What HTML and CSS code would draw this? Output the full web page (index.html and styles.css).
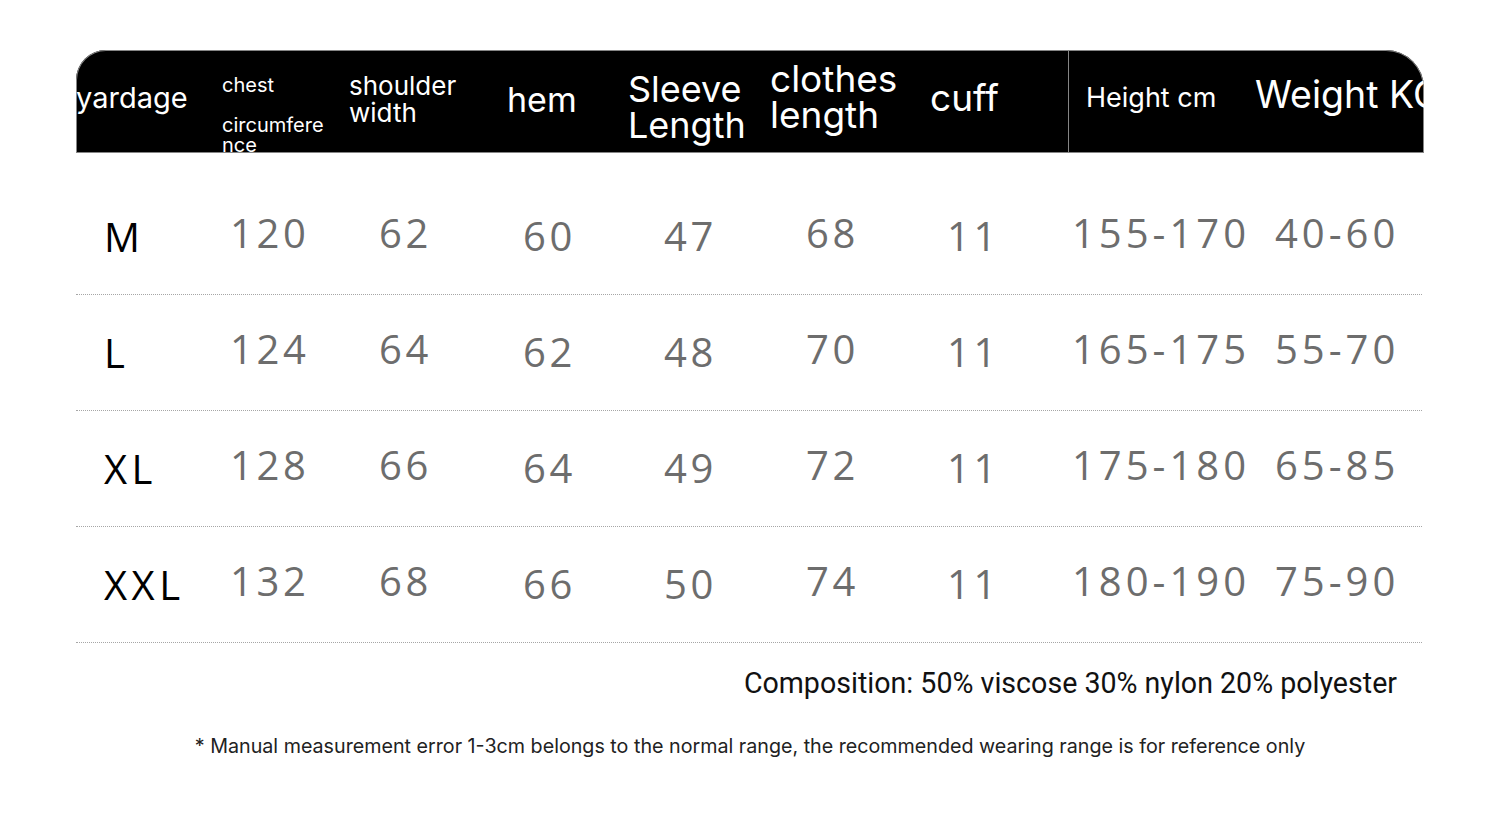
FILE: index.html
```html
<!DOCTYPE html>
<html lang="en">
<head>
<meta charset="utf-8">
<title>Size chart</title>
<link rel="stylesheet" href="styles.css">
</head>
<body>
<div class="sheet">
  <div class="head">
    <div class="h h-yard">yardage</div>
    <div class="h h-chest">chest<br><br>circumfere<br>nce</div>
    <div class="h h-shoulder">shoulder<br>width</div>
    <div class="h h-hem">hem</div>
    <div class="h h-sleeve">Sleeve<br>Length</div>
    <div class="h h-clothes">clothes<br>length</div>
    <div class="h h-cuff">cuff</div>
    <div class="h h-height">Height cm</div>
    <div class="h h-weight">Weight KG</div>
  </div>

  <div class="rows">
    <div class="row">
      <div class="c c1">M</div><div class="c c2">120</div><div class="c c3">62</div><div class="c c4">60</div><div class="c c5">47</div><div class="c c6">68</div><div class="c c7">11</div><div class="c c8">155-170</div><div class="c c9">40-60</div>
    </div>
    <div class="row">
      <div class="c c1">L</div><div class="c c2">124</div><div class="c c3">64</div><div class="c c4">62</div><div class="c c5">48</div><div class="c c6">70</div><div class="c c7">11</div><div class="c c8">165-175</div><div class="c c9">55-70</div>
    </div>
    <div class="row">
      <div class="c c1">XL</div><div class="c c2">128</div><div class="c c3">66</div><div class="c c4">64</div><div class="c c5">49</div><div class="c c6">72</div><div class="c c7">11</div><div class="c c8">175-180</div><div class="c c9">65-85</div>
    </div>
    <div class="row">
      <div class="c c1">XXL</div><div class="c c2">132</div><div class="c c3">68</div><div class="c c4">66</div><div class="c c5">50</div><div class="c c6">74</div><div class="c c7">11</div><div class="c c8">180-190</div><div class="c c9">75-90</div>
    </div>
  </div>

  <p class="comp">Composition: 50% viscose 30% nylon 20% polyester</p>
  <p class="note">* Manual measurement error 1-3cm belongs to the normal range, the recommended wearing range is for reference only</p>
</div>
</body>
</html>
```

FILE: styles.css
```css
html, body {
  margin: 0;
  padding: 0;
  background: #ffffff;
}

.sheet {
  width: 1348px;
  margin-left: 76px;
  padding-top: 50px;
}

.head {
  display: grid;
  grid-template-columns: 146px 127px 158px 121px 142px 160px 138px 187px 169px;
  height: 103px;
  background: #000;
  border-radius: 30px 38px 0 0;
  box-shadow: inset 0 0 0 1px #858585;
  overflow: hidden;
  color: #fff;
  font-family: Inter, "Noto Sans", sans-serif;
  white-space: nowrap;
}

.h {
  line-height: 1.21;
}

.h-yard { font-size: 29px; padding-top: 30px; }
.h-chest { font-size: 20px; line-height: 20px; padding-top: 25px; }
.h-shoulder { font-size: 26px; line-height: 27px; padding-top: 22px; }
.h-hem { font-size: 34px; padding-top: 29px; }
.h-sleeve { font-size: 36px; line-height: 36px; padding-top: 21px; }
.h-clothes { font-size: 37px; line-height: 36px; padding-top: 11px; }
.h-cuff { font-size: 37px; padding-top: 26px; }
.h-height {
  font-size: 27px;
  padding-top: 32px;
  padding-left: 17px;
  border-left: 1px solid #858585;
}
.h-weight { font-size: 37.5px; padding-top: 22px; }

.rows {
  margin-top: 26px;
  width: 1346px;
}

.row {
  display: grid;
  grid-template-columns: 146px 127px 158px 121px 142px 160px 138px 187px 167px;
  height: 116px;
  box-sizing: border-box;
  border-bottom: 1px dotted #a6a6a6;
  font-family: "Open Sans", "Noto Sans", sans-serif;
  white-space: nowrap;
}

.c {
  font-size: 40px;
  line-height: 40px;
  letter-spacing: 3.6px;
  color: #6d6d6d;
  padding-top: 34px;
}

.c1 { color: #000; padding-left: 28px; padding-top: 38px; letter-spacing: 4.5px; }
.c2 { padding-left: 8px; }
.c3 { padding-left: 30px; }
.c4 { padding-left: 16px; padding-top: 37px; }
.c5 { padding-left: 36px; padding-top: 37px; }
.c6 { padding-left: 36px; }
.c7 { padding-left: 17px; padding-top: 37px; }
.c8 { padding-left: 4px; letter-spacing: 4px; }
.c9 { padding-left: 20px; letter-spacing: 4px; }

.comp {
  margin: 23px 0 0;
  padding-right: 27px;
  text-align: right;
  font-family: Roboto, "Liberation Sans", sans-serif;
  font-size: 28.6px;
  line-height: 1.2;
  color: #111;
}

.note {
  margin: 34px 0 0;
  text-align: center;
  font-family: Inter, "Noto Sans", sans-serif;
  font-size: 19.7px;
  line-height: 24px;
  color: #222;
}
```
